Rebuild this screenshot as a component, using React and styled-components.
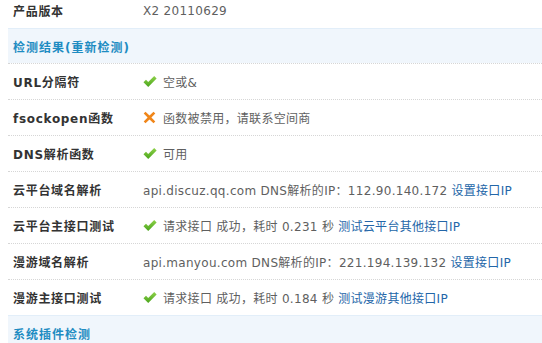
import styled, { createGlobalStyle } from 'styled-components';

const GlobalStyle = createGlobalStyle`
  body {
    margin: 0;
    background: #fff;
    overflow: hidden;
    font: 12px "DejaVu Sans", "Noto Sans CJK SC", sans-serif;
    color: #333;
  }
`;

const Page = styled.div`
  margin: -7px 0 0 8px;
`;

const Row = styled.div`
  display: flex;
  align-items: center;
  height: 35px;
  border-top: 1px dotted #d6d6d6;
  &:first-child {
    border-top: none;
  }
`;

const Partition = styled.div`
  display: flex;
  align-items: center;
  height: 34px;
  padding-left: 5px;
  background: #f0f6fc;
  border-top: 1px solid #e2eef9;
  color: #1e8cc2;
  font-weight: bold;
  letter-spacing: 1px;
`;

const Label = styled.div`
  width: 130px;
  padding-left: 5px;
  font-weight: bold;
  color: #333;
  letter-spacing: 0.7px;
`;

const Value = styled.div`
  display: flex;
  align-items: center;
  color: #5f5f5f;
  white-space: nowrap;
  letter-spacing: 0.3px;
`;

const Link = styled.a`
  color: #2366a8;
  text-decoration: none;
  margin-left: 4px;
`;

const IconBox = styled.span`
  display: inline-flex;
  width: 14px;
  margin-right: 6px;
`;

const Check = () => (
  <IconBox>
    <svg width="15" height="13" viewBox="0 0 15 13">
      <defs>
        <linearGradient id="ok" x1="0" y1="0" x2="0" y2="1">
          <stop offset="0" stopColor="#8fd24a" />
          <stop offset="1" stopColor="#4aa51c" />
        </linearGradient>
      </defs>
      <path d="M0.5 7.2 L3.2 4.6 L5.6 7 L12 0.6 L14.6 3.2 L5.6 12.4 Z" fill="url(#ok)" />
    </svg>
  </IconBox>
);

const Cross = () => (
  <IconBox>
    <svg width="13" height="13" viewBox="0 0 13 13">
      <path
        d="M2.5 0.8 L6.5 4.6 L10.5 0.8 L12.3 2.6 L8.4 6.5 L12.3 10.4 L10.5 12.2 L6.5 8.4 L2.5 12.2 L0.7 10.4 L4.6 6.5 L0.7 2.6 Z"
        fill="#f0861a"
      />
    </svg>
  </IconBox>
);

const rows = [
  { label: 'URL分隔符', icon: 'ok', text: '空或&' },
  { label: 'fsockopen函数', icon: 'no', text: '函数被禁用，请联系空间商' },
  { label: 'DNS解析函数', icon: 'ok', text: '可用' },
  { label: '云平台域名解析', text: 'api.discuz.qq.com DNS解析的IP：112.90.140.172', link: '设置接口IP' },
  { label: '云平台主接口测试', icon: 'ok', text: '请求接口 成功，耗时 0.231 秒', link: '测试云平台其他接口IP' },
  { label: '漫游域名解析', text: 'api.manyou.com DNS解析的IP：221.194.139.132', link: '设置接口IP' },
  { label: '漫游主接口测试', icon: 'ok', text: '请求接口 成功，耗时 0.184 秒', link: '测试漫游其他接口IP' },
];

export default function App() {
  return (
    <Page>
      <GlobalStyle />
      <Row>
        <Label>产品版本</Label>
        <Value>X2 20110629</Value>
      </Row>
      <Partition>检测结果(重新检测)</Partition>
      {rows.map((r) => (
        <Row key={r.label}>
          <Label>{r.label}</Label>
          <Value>
            {r.icon === 'ok' && <Check />}
            {r.icon === 'no' && <Cross />}
            {r.text}
            {r.link && <Link href="#">{r.link}</Link>}
          </Value>
        </Row>
      ))}
      <Partition>系统插件检测</Partition>
    </Page>
  );
}
